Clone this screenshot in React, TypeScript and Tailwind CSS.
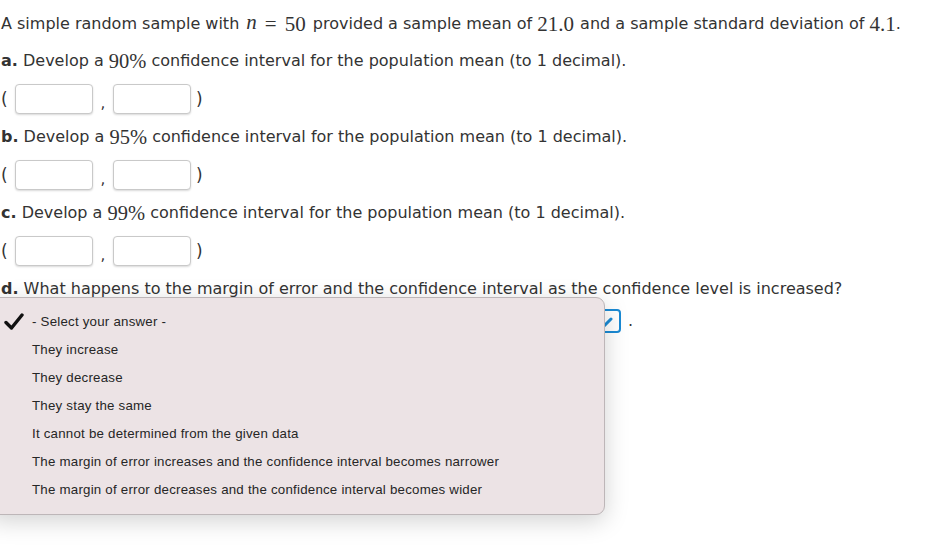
import React from "react";

const M = ({ children, italic, big }: { children: React.ReactNode; italic?: boolean; big?: boolean }) => (
  <span
    className={`${big ? "text-[21px]" : "text-[20.5px]"} leading-none ${italic ? "italic" : ""}`}
    style={{ fontFamily: '"Liberation Serif", "DejaVu Serif", serif' }}
  >
    {children}
  </span>
);

const Box = () => (
  <div className="w-[78px] h-[30px] rounded-[4px] border border-[#c9c9c9] bg-white shadow-[0_1px_2px_rgba(0,0,0,0.15)]" />
);

const InputsRow = () => (
  <div className="flex items-center h-[30px] mt-[11px]">
    <span className="w-[14px] text-[17px] leading-none">(</span>
    <Box />
    <span className="w-[20px] text-center text-[15px] leading-none pt-[8px]">,</span>
    <Box />
    <span className="ml-[5px] text-[17px] leading-none">)</span>
  </div>
);

const Q = ({ label, pct, first }: { label: string; pct: string; first?: boolean }) => (
  <div className={`h-[24px] ${first ? "mt-[13px]" : "mt-[11px]"} flex items-center whitespace-nowrap`}>
    <b>{label}</b>&nbsp;Develop a&nbsp;<M>{pct}%</M>&nbsp;confidence interval for the population mean (to 1 decimal).
  </div>
);

const items = [
  "They increase",
  "They decrease",
  "They stay the same",
  "It cannot be determined from the given data",
  "The margin of error increases and the confidence interval becomes narrower",
  "The margin of error decreases and the confidence interval becomes wider",
];

export default function App() {
  return (
    <div
      className="relative w-[932px] h-[546px] bg-white overflow-hidden text-[#333] text-[16px]"
      style={{ fontFamily: '"DejaVu Sans", Verdana, sans-serif' }}
    >
      <div className="pt-[12px] pl-[1px]">
        <div className="h-[24px] flex items-center whitespace-nowrap">
          A simple random sample with&nbsp;
          <span className="ml-[2px]">
            <M italic big>n</M>
          </span>
          <M big>
            <span className="mx-[8px]">=</span>50
          </M>
          <span className="ml-[2px]">&nbsp;provided a sample mean of&nbsp;</span>
          <M big>21.0</M>
          <span className="ml-[1px]">&nbsp;and a sample standard deviation of&nbsp;</span>
          <M big>4.1</M>.
        </div>
        <Q label="a." pct="90" first />
        <InputsRow />
        <Q label="b." pct="95" />
        <InputsRow />
        <Q label="c." pct="99" />
        <InputsRow />
        <div className="h-[24px] mt-[11px] flex items-center whitespace-nowrap">
          <b>d.</b>&nbsp;What happens to the margin of error and the confidence interval as the confidence level is increased?
        </div>
        <div className="h-[24px] mt-[8px] flex items-center">
          <div className="ml-[440px] w-[180px] h-[24px] rounded-[4px] border-2 border-[#1a8ad4] relative">
            <svg className="absolute right-[4px] top-[6px]" width="24" height="12" viewBox="0 0 24 12">
              <path d="M4 2 L12 10 L20 2" fill="none" stroke="#1a8ad4" strokeWidth="3" strokeLinecap="round" />
            </svg>
          </div>
          <span className="ml-[7px]">.</span>
        </div>
      </div>

      <div
        className="absolute left-[-12px] top-[297px] w-[617px] h-[218px] rounded-[9px] bg-[#ece3e5] border border-[#bdb6b8] shadow-[0_6px_24px_rgba(0,0,0,0.18)] text-[#262626] text-[13.3px] tracking-[0.22px] pt-[10px]"
        style={{ fontFamily: '"Liberation Sans", Arial, sans-serif' }}
      >
        <div className="h-[28px] flex items-center relative pl-[43px]">
          <svg className="absolute left-[14px] top-[5px]" width="22" height="18" viewBox="0 0 22 18">
            <path d="M3 9.5 L8.5 15 L19 2" fill="none" stroke="#111" strokeWidth="3.4" strokeLinecap="round" strokeLinejoin="round" />
          </svg>
          - Select your answer -
        </div>
        {items.map((t) => (
          <div key={t} className="h-[28px] flex items-center pl-[43px]">
            {t}
          </div>
        ))}
      </div>
    </div>
  );
}
